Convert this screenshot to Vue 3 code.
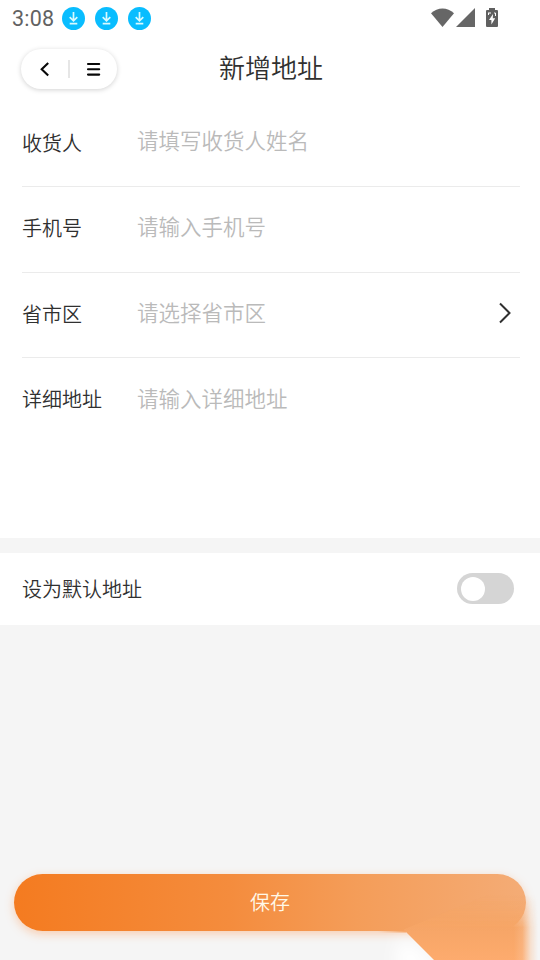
<script setup>
import { ref } from 'vue'

const fields = [
  { label: '收货人', hint: '请填写收货人姓名' },
  { label: '手机号', hint: '请输入手机号' },
  { label: '省市区', hint: '请选择省市区', picker: true },
  { label: '详细地址', hint: '请输入详细地址', tall: true },
]
const isDefault = ref(false)
</script>

<template>
  <main class="page">
    <div class="status">
      <span class="clock">3:08</span>
      <svg v-for="n in 3" :key="n" class="download" viewBox="0 0 23 23">
        <circle cx="11.5" cy="11.5" r="11.5" fill="#09bdff" />
        <path d="M11.5 5V13.5M7.7 10.2L11.5 13.8L15.3 10.2M7.7 16.6H15.3" fill="none" stroke="#d9faff" stroke-width="1.7" />
      </svg>
      <svg class="signals" viewBox="0 0 70 22">
        <path d="M1 5.2C7.5-1.2 17.5-1.2 24 5.2L12.5 19Z" fill="#666" />
        <path d="M26 19L45 0V19Z" fill="#666" />
        <path d="M59 0H65V2H67Q68 2 68 3V18Q68 19 67 19H57Q56 19 56 18V3Q56 2 57 2H59Z" fill="#606060" />
        <path d="M63 6L59 12H61.4V16.5L65.2 10.3H62.8Z" fill="#fff" />
        <path d="M58 5H61M58.5 5V7M64 5H65.5V8" fill="none" stroke="#fff" stroke-width="1" />
      </svg>
    </div>
    <header class="nav">
      <div class="capsule">
        <svg viewBox="0 0 96 40">
          <path d="M27.2 14L20.7 20.3L27.2 26.6" fill="none" stroke="#080808" stroke-width="2.1" />
          <path d="M48 11V29" stroke="#dedede" stroke-width="1.5" />
          <path d="M67 15H78.2M67 20.3H78.2M67 25.6H78.2" stroke="#080808" stroke-width="2.1" stroke-linecap="round" />
        </svg>
      </div>
      <h1>新增地址</h1>
    </header>
    <form class="form">
      <div v-for="f in fields" :key="f.label" class="row" :class="{ tall: f.tall, picker: f.picker }">
        <span class="label">{{ f.label }}</span>
        <span class="hint">{{ f.hint }}</span>
        <svg v-if="f.picker" class="chevron" viewBox="0 0 14 22">
          <path d="M2 1.5L11.5 11L2 20.5" fill="none" stroke="#303030" stroke-width="2" />
        </svg>
      </div>
    </form>
    <section class="default">
      <span>设为默认地址</span>
      <button class="switch" :class="{ on: isDefault }" @click="isDefault = !isDefault"><i></i></button>
    </section>
    <footer class="footer">
      <button class="save">保存</button>
      <svg class="flare" viewBox="0 0 170 110">
        <defs>
          <linearGradient id="fade" x1="0" y1="45" x2="0" y2="110" gradientUnits="userSpaceOnUse">
            <stop offset="0" stop-color="#f5a665" stop-opacity="0" />
            <stop offset=".5" stop-color="#f6a566" />
            <stop offset="1" stop-color="#fdab6e" />
          </linearGradient>
          <linearGradient id="edge" x1="144" y1="0" x2="168" y2="0" gradientUnits="userSpaceOnUse">
            <stop offset="0" stop-color="#fff" />
            <stop offset=".35" stop-color="#ddd" />
            <stop offset=".7" stop-color="#444" />
            <stop offset="1" stop-color="#000" />
          </linearGradient>
          <linearGradient id="lip" x1="8" y1="0" x2="36" y2="0" gradientUnits="userSpaceOnUse">
            <stop offset="0" stop-color="#f6a566" stop-opacity="0" />
            <stop offset="1" stop-color="#f6a566" />
          </linearGradient>
          <mask id="side"><rect width="170" height="110" fill="url(#edge)" /></mask>
          <clipPath id="below"><rect y="81" width="170" height="29" /></clipPath>
          <filter id="soft" x="-50%" y="-50%" width="200%" height="200%"><feGaussianBlur stdDeviation="8" /></filter>
          <filter id="slight"><feGaussianBlur stdDeviation=".7" /></filter>
        </defs>
        <g clip-path="url(#below)">
          <path d="M28 92H42L72 122H25Z" fill="#fff" filter="url(#soft)" />
          <path d="M8 80.5H36V82.5H8Z" fill="url(#lip)" />
        </g>
        <path d="M33.5 79.5L66 112H170V42H125Z" fill="url(#fade)" mask="url(#side)" filter="url(#slight)" />
      </svg>
    </footer>
  </main>
</template>

<style>
body { margin: 0; background: #f5f5f5; }
</style>

<style scoped>
* { box-sizing: border-box; }
.page {
  height: 960px;
  overflow: hidden;
  display: flex;
  flex-direction: column;
  background: #f5f5f5;
  color: #303030;
  font: 350 20px/30px "Noto Sans CJK SC", sans-serif;
}
.status {
  height: 37px;
  flex: none;
  background: #fff;
  display: flex;
  align-items: center;
  gap: 10px;
  padding: 0 40px 0 12px;
}
.clock {
  width: 40px;
  font: 21.5px/24px Roboto, sans-serif;
  letter-spacing: .2px;
  color: #626262;
  white-space: nowrap;
}
.download { width: 23px; height: 23px; }
.signals { width: 70px; height: 22px; margin-left: auto; margin-top: 1px; }
.nav {
  height: 64px;
  flex: none;
  background: #fff;
  display: grid;
  grid-template-columns: 96px 1fr 95px;
  padding: 12px 20px 0 21px;
}
.capsule {
  height: 40px;
  border-radius: 20px;
  background: #fff;
  box-shadow: 0 1px 5px rgba(0, 0, 0, .18);
}
.capsule svg { width: 96px; height: 40px; display: block; }
h1 {
  margin: 0;
  text-align: center;
  font-size: 26px;
  line-height: 35px;
  font-weight: 350;
}
.form {
  height: 437px;
  flex: none;
  background: #fff;
  padding: 0 20px 0 22px;
}
.row {
  height: 85.6px;
  display: flex;
  align-items: center;
  border-bottom: 1px solid #ebebeb;
  padding-right: 8px;
}
.row:nth-child(2) { height: 86px; }
.row:nth-child(3) { height: 85.4px; padding-bottom: 2px; }
.row:nth-child(2) .label { padding-bottom: 2px; }
.label { width: 115px; }
.hint { flex: 1; font-size: 21.5px; color: #bababa; padding-bottom: 6px; }
.row:nth-child(3) .hint { padding-bottom: 4px; }
.tall { height: 179px; border: 0; align-items: flex-start; padding-top: 26px; }
.tall .hint { padding: 0; margin-top: -1px; }
.chevron { width: 14px; height: 22px; margin-bottom: 1px; }
.default {
  margin-top: 15px;
  height: 72px;
  flex: none;
  background: #fff;
  display: flex;
  align-items: center;
  justify-content: space-between;
  padding: 0 26px 1px 22px;
}
.switch {
  width: 57px;
  height: 31px;
  padding: 3.5px;
  border: 0;
  border-radius: 16px;
  background: #d5d5d5;
  display: flex;
}
.switch i { width: 24px; height: 24px; border-radius: 50%; background: #fff; }
.switch.on { justify-content: flex-end; background: #f47b20; }
.footer {
  margin-top: auto;
  height: 110px;
  flex: none;
  position: relative;
  padding: 24px 14px 0;
}
.save {
  display: block;
  width: 100%;
  height: 57px;
  padding: 0 0 2px;
  border: 0;
  border-radius: 29px;
  background: linear-gradient(90deg, #f47b20, #f48c3d 42%, #f49d59 67%, #f4ac76);
  box-shadow: 0 3px 10px rgba(255, 132, 48, .35);
  color: #fff8e8;
  font: 350 20px/55px "Noto Sans CJK SC", sans-serif;
}
.flare {
  position: absolute;
  right: 0;
  bottom: 0;
  width: 170px;
  height: 110px;
  pointer-events: none;
}
</style>
